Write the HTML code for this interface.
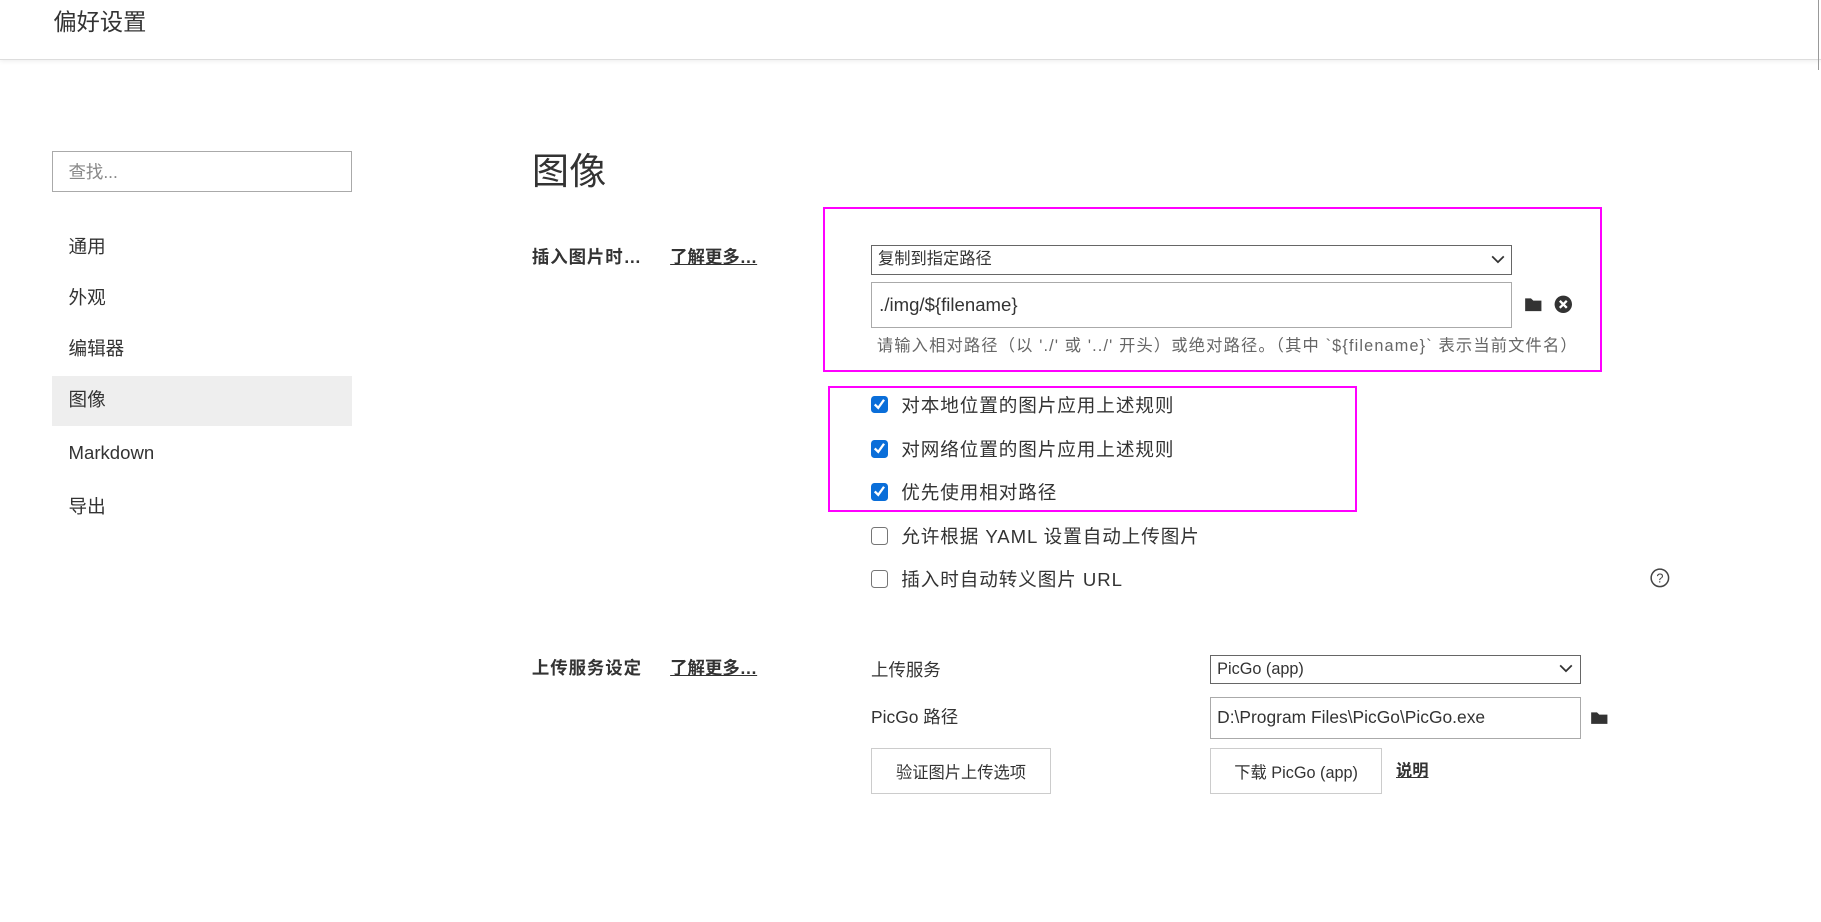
<!DOCTYPE html>
<html><head><meta charset="utf-8"><style>
*{box-sizing:border-box;margin:0;padding:0}
html,body{width:1821px;height:922px;overflow:hidden;background:#fff}
#w{zoom:1.1614;width:1568px;height:794px;position:relative;font-family:"Liberation Sans","Noto Sans CJK SC",sans-serif;color:#333}
.a{position:absolute;white-space:nowrap}
.hd{position:absolute;left:0;top:0;width:1568px;height:52px;border-bottom:1px solid #ddd;box-shadow:0 1px 4px rgba(0,0,0,.08)}
.side{font-size:16px;color:#333;left:59px;line-height:20px}
.box{position:absolute;border:1px solid #888;background:#fff}
.cb{position:absolute;left:750px;width:15px;height:15px;border-radius:3px}
.on{background:#0a6ed9}
.off{border:1px solid #767676;background:#fff}
.lbl{left:776px;font-size:16px;line-height:20px;color:#333;letter-spacing:0.8px}
.btn{position:absolute;border:1px solid #ccc;background:#fff;font-size:14px;display:flex;align-items:center;justify-content:center;color:#333}
</style></head><body><div id="w">
<div class="hd"></div>
<div class="a" style="left:46px;top:3px;font-size:20px;color:#333">偏好设置</div>
<div class="a" style="left:1565px;top:0;width:1px;height:60px;background:#999"></div>
<div class="box" style="left:45px;top:130px;width:258px;height:35px;border-color:#aaa"></div>
<div class="a" style="left:59px;top:137px;font-size:15px;color:#888">查找...</div>
<div class="a" style="left:45px;top:324px;width:258px;height:43px;background:#eee"></div>
<div class="a side" style="top:202px">通用</div>
<div class="a side" style="top:246px">外观</div>
<div class="a side" style="top:290px">编辑器</div>
<div class="a side" style="top:334px">图像</div>
<div class="a side" style="top:380px">Markdown</div>
<div class="a side" style="top:426px">导出</div>
<div class="a" style="left:458px;top:128px;font-size:32px;line-height:38px;color:#333">图像</div>
<div class="a" style="left:458px;top:212px;font-size:15px;font-weight:bold;line-height:20px;letter-spacing:0.8px">插入图片时…</div>
<div class="a" style="left:577px;top:212px;font-size:15px;font-weight:bold;line-height:20px;text-decoration:underline">了解更多…</div>
<div class="a" style="left:709px;top:178px;width:670px;height:142px;border:2px solid #f0f"></div>
<div class="box" style="left:750px;top:211px;width:552px;height:26px;border-color:#666"></div>
<div class="a" style="left:756px;top:214px;font-size:14px;line-height:18px">复制到指定路径</div>
<svg class="a" style="left:1284px;top:219px" width="12" height="10"><path d="M1 2l5 5 5-5" fill="none" stroke="#333" stroke-width="1.5"/></svg>
<div class="box" style="left:750px;top:243px;width:552px;height:39px;border-color:#aaa"></div>
<div class="a" style="left:757px;top:252px;font-size:16px;line-height:20px">./img/${filename}</div>
<svg class="a" style="left:1312px;top:255px" width="17" height="14"><path d="M1 2h5l2 2h7v9H1z" fill="#333"/></svg>
<svg class="a" style="left:1338px;top:254px" width="16" height="16"><circle cx="8" cy="8" r="7.5" fill="#333"/><path d="M5 5l6 6M11 5l-6 6" stroke="#fff" stroke-width="2"/></svg>
<div class="a" style="left:755px;top:289px;font-size:14px;line-height:18px;color:#666;letter-spacing:1px">请输入相对路径（以 './' 或 '../' 开头）或绝对路径。（其中 `${filename}` 表示当前文件名）</div>
<div class="a" style="left:713px;top:332px;width:455px;height:109px;border:2px solid #f0f"></div>
<div class="cb on" style="top:341px"></div><svg class="a" style="left:752px;top:343px" width="11" height="11"><path d="M1.5 5.5l3 3 5-7" fill="none" stroke="#fff" stroke-width="2"/></svg>
<div class="a lbl" style="top:339px">对本地位置的图片应用上述规则</div>
<div class="cb on" style="top:379px"></div><svg class="a" style="left:752px;top:381px" width="11" height="11"><path d="M1.5 5.5l3 3 5-7" fill="none" stroke="#fff" stroke-width="2"/></svg>
<div class="a lbl" style="top:377px">对网络位置的图片应用上述规则</div>
<div class="cb on" style="top:416px"></div><svg class="a" style="left:752px;top:418px" width="11" height="11"><path d="M1.5 5.5l3 3 5-7" fill="none" stroke="#fff" stroke-width="2"/></svg>
<div class="a lbl" style="top:414px">优先使用相对路径</div>
<div class="cb off" style="top:454px"></div>
<div class="a lbl" style="top:452px">允许根据 YAML 设置自动上传图片</div>
<div class="cb off" style="top:491px"></div>
<div class="a lbl" style="top:489px">插入时自动转义图片 URL</div>
<svg class="a" style="left:1421px;top:489px" width="17" height="17"><circle cx="8.5" cy="8.5" r="7.5" fill="none" stroke="#444" stroke-width="1.3"/><text x="8.5" y="12.5" font-size="11" text-anchor="middle" fill="#444" font-family="Liberation Sans">?</text></svg>
<div class="a" style="left:458px;top:566px;font-size:15px;font-weight:bold;line-height:20px;letter-spacing:0.8px">上传服务设定</div>
<div class="a" style="left:577px;top:566px;font-size:15px;font-weight:bold;line-height:20px;text-decoration:underline">了解更多…</div>
<div class="a" style="left:750px;top:567px;font-size:15px;line-height:20px">上传服务</div>
<div class="box" style="left:1042px;top:564px;width:319px;height:25px;border-color:#666"></div>
<div class="a" style="left:1048px;top:567px;font-size:14px;line-height:18px">PicGo (app)</div>
<svg class="a" style="left:1342px;top:571px" width="12" height="10"><path d="M1 2l5 5 5-5" fill="none" stroke="#333" stroke-width="1.5"/></svg>
<div class="a" style="left:750px;top:608px;font-size:15px;line-height:20px">PicGo 路径</div>
<div class="box" style="left:1042px;top:600px;width:319px;height:36px;border-color:#aaa"></div>
<div class="a" style="left:1048px;top:609px;font-size:15px;line-height:18px">D:\Program Files\PicGo\PicGo.exe</div>
<svg class="a" style="left:1369px;top:611px" width="16" height="13"><path d="M1 2h5l2 2h7v8H1z" fill="#333"/></svg>
<div class="btn" style="left:750px;top:644px;width:155px;height:40px">验证图片上传选项</div>
<div class="btn" style="left:1042px;top:644px;width:148px;height:40px">下载 PicGo (app)</div>
<div class="a" style="left:1202px;top:655px;font-size:14px;font-weight:bold;line-height:18px;text-decoration:underline">说明</div>
</div></body></html>
